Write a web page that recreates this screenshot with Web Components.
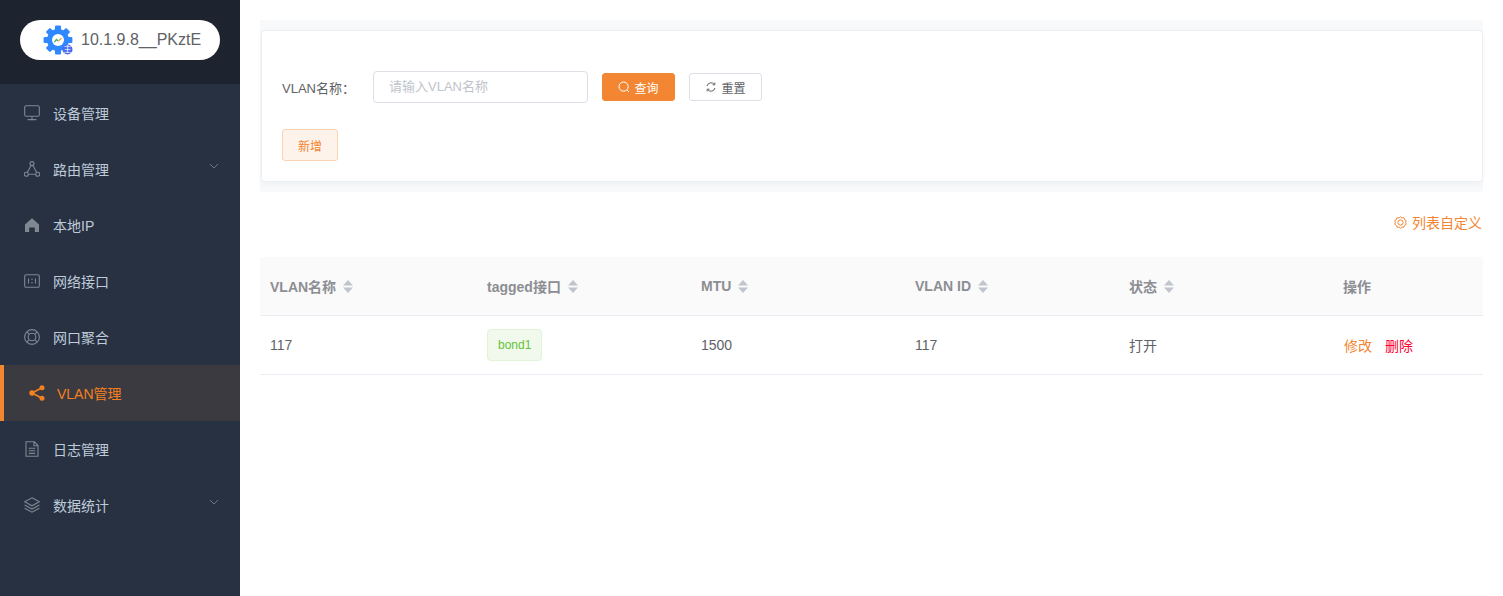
<!DOCTYPE html>
<html lang="zh">
<head>
<meta charset="utf-8">
<title>VLAN管理</title>
<style>
  html, body { margin: 0; height: 100%; }
  body { font-family: "Liberation Sans", "Noto Sans CJK SC", sans-serif; }
</style>
</head>
<body>
<vlan-app>
  <side-bar slot="side">
    <host-badge slot="head">10.1.9.8__PKztE</host-badge>
    <menu-item icon="monitor">设备管理</menu-item>
    <menu-item icon="graph" arrow>路由管理</menu-item>
    <menu-item icon="home">本地IP</menu-item>
    <menu-item icon="port">网络接口</menu-item>
    <menu-item icon="ring">网口聚合</menu-item>
    <menu-item icon="share" active>VLAN管理</menu-item>
    <menu-item icon="file">日志管理</menu-item>
    <menu-item icon="layers" arrow>数据统计</menu-item>
  </side-bar>
  <search-panel></search-panel>
  <list-custom></list-custom>
  <vlan-table></vlan-table>
</vlan-app>

<script>
/**
 * Icons of the side menu, all on a 16x16 box.
 */
const ICONS = {
  monitor: '<rect x="0.7" y="0.7" width="14.6" height="10.6" rx="1.6"/><path d="M8 11.5v3M3.5 14.6h9"/>',
  graph: '<circle cx="8" cy="2.6" r="2"/><circle cx="2.3" cy="13.2" r="2"/><circle cx="13.7" cy="13.2" r="2"/><path d="M7 4.4 3.3 11.4M9 4.4l3.7 7M4.3 13.2h7.4"/>',
  home: '<path fill="currentColor" stroke="none" d="M8 1.2 15 7.4V15H10.8V10.6H5.2V15H1V7.4Z"/>',
  port: '<rect x="0.7" y="1.7" width="14.6" height="12.6" rx="1.4"/><path d="M4.5 5.5v5M11.5 5.5v5M8 5.5v1.4M8 9v1.5"/>',
  ring: '<circle cx="8" cy="8" r="7.4"/><circle cx="8" cy="8" r="3.8"/><path d="M2.8 2.8 5.3 5.3M13.2 2.8l-2.5 2.5M2.8 13.2l2.5-2.5M13.2 13.2l-2.5-2.5"/>',
  share: '<g fill="currentColor" stroke="none"><circle cx="3" cy="8" r="2.7"/><circle cx="13" cy="2.8" r="2.5"/><circle cx="13" cy="13.2" r="2.5"/></g><path stroke-width="1.6" d="M3 8 13 2.8M3 8l10 5.2"/>',
  file: '<path d="M2 .8H10.4L14 4.4V15.2H2ZM10 1V4.8H14M4.8 7.2h6.4M4.8 9.8h6.4M4.8 12.4h6.4"/>',
  layers: '<path d="M8 .8 15.4 4.8 8 8.8.6 4.8ZM.6 8 8 12l7.4-4M.6 11.2 8 15.2l7.4-4"/>'
}

/**
 * Reads a template's markup into a new open shadow root.
 *
 * @param {HTMLElement} el the host.
 * @param {string} html the markup.
 */
function shadow (el, html) {
  const template = document.createElement('template')
  template.innerHTML = html
  el.attachShadow({ mode: 'open' }).appendChild(template.content.cloneNode(true))
}

customElements.define('vlan-app', class extends HTMLElement {
  constructor () {
    super()
    shadow(this, `
      <style>
        :host { display: flex; width: 100%; height: 100vh; overflow: hidden; background: #fff; }
        main { flex: 1; min-width: 0; display: flex; flex-direction: column; padding: 20px 20px 0; position: relative; }
        .topshade { height: 0; margin: -20px -20px 20px; box-shadow: 0 0 12px rgba(0, 0, 0, .14); }
      </style>
      <slot name="side"></slot>
      <main><div class="topshade"></div><slot></slot></main>
    `)
  }
})

customElements.define('side-bar', class extends HTMLElement {
  constructor () {
    super()
    shadow(this, `
      <style>
        :host { display: block; width: 240px; flex: none; background: #283142; position: relative; z-index: 1; }
        header { height: 84px; box-sizing: border-box; padding: 20px; background: #1d2430; margin-bottom: 1px; }
      </style>
      <header><slot name="head"></slot></header>
      <slot></slot>
    `)
  }
})

customElements.define('host-badge', class extends HTMLElement {
  constructor () {
    super()
    shadow(this, `
      <style>
        :host { display: flex; align-items: center; gap: 7px; height: 40px; padding-left: 23px; border-radius: 20px; background: #fff; color: #606266; font-size: 16px; }
        svg { width: 31px; height: 31px; flex: none; }
        text { font-size: 8px; fill: #fff; font-family: "Noto Sans CJK SC", sans-serif; }
      </style>
      <svg viewBox="0 0 31 31">
        <g fill="#2f88ff">
          <circle cx="15" cy="15" r="11"/>
          <g id="teeth">
            <rect x="12" y="0.6" width="6" height="6" rx="1"/>
            <rect x="12" y="0.6" width="6" height="6" rx="1" transform="rotate(45 15 15)"/>
            <rect x="12" y="0.6" width="6" height="6" rx="1" transform="rotate(90 15 15)"/>
            <rect x="12" y="0.6" width="6" height="6" rx="1" transform="rotate(135 15 15)"/>
            <rect x="12" y="0.6" width="6" height="6" rx="1" transform="rotate(180 15 15)"/>
            <rect x="12" y="0.6" width="6" height="6" rx="1" transform="rotate(225 15 15)"/>
            <rect x="12" y="0.6" width="6" height="6" rx="1" transform="rotate(270 15 15)"/>
            <rect x="12" y="0.6" width="6" height="6" rx="1" transform="rotate(315 15 15)"/>
          </g>
        </g>
        <circle cx="15" cy="15" r="6" fill="#fff"/>
        <path d="M11.5 17l2-2.5 1.8 1.6" fill="none" stroke="#45b36b" stroke-width="1.3"/>
        <path d="M15.3 16.1 18.5 13" fill="none" stroke="#e8a33d" stroke-width="1.3"/>
        <circle cx="24.5" cy="24.5" r="5" fill="#4a6cf0"/>
        <text x="24.5" y="27.3" text-anchor="middle">主</text>
      </svg>
      <span><slot></slot></span>
    `)
  }
})

customElements.define('menu-item', class extends HTMLElement {
  constructor () {
    super()
    const arrow = this.hasAttribute('arrow')
      ? '<svg class="arrow" viewBox="0 0 10 6"><path d="M1 1l4 4 4-4"/></svg>'
      : ''
    shadow(this, `
      <style>
        :host { display: flex; align-items: center; gap: 13px; height: 56px; padding-left: 24px; box-sizing: border-box; font-size: 14px; color: #bfcbd9; position: relative; }
        :host([active]) { background: #3a3a40; color: #f58020; border-left: 4px solid #f28632; padding-left: 25px; gap: 12px; }
        svg.icon { width: 16px; height: 16px; flex: none; color: #7f8793; fill: none; stroke: currentColor; stroke-width: 1.1; }
        :host([active]) svg.icon { color: #f58020; }
        .arrow { position: absolute; right: 21px; top: 22px; width: 10px; height: 6px; fill: none; stroke: #6f7785; stroke-width: 1; }
      </style>
      <svg class="icon" viewBox="0 0 16 16">${ICONS[this.getAttribute('icon')]}</svg>
      <span><slot></slot></span>
      ${arrow}
    `)
  }
})

customElements.define('ui-button', class extends HTMLElement {
  constructor () {
    super()
    shadow(this, `
      <style>
        :host { display: inline-flex; align-items: center; justify-content: center; gap: 4px; box-sizing: border-box; width: 73px; height: 28px; border: 1px solid #dcdfe6; border-radius: 3px; background: #fff; color: #606266; font-size: 12px; }
        :host([primary]) { background: #f28632; border-color: #f28632; color: #fff; }
        :host([plain]) { width: 56px; height: 32px; background: #fef3ea; border-color: #fbd3b3; color: #f28632; }
        ::slotted(svg) { width: 12px; height: 12px; fill: none; stroke: currentColor; stroke-width: 1; flex: none; }
      </style>
      <slot></slot>
    `)
  }
})

customElements.define('search-panel', class extends HTMLElement {
  constructor () {
    super()
    shadow(this, `
      <style>
        :host { display: block; padding: 10px 0 10px 1px; background: #f8f9fb; }
        .card { box-sizing: border-box; height: 152px; padding: 40px 20px 0; background: #fff; border: 1px solid #ebeef5; border-radius: 4px; box-shadow: 0 2px 6px rgba(0, 0, 0, .04); }
        .row { display: flex; align-items: center; height: 32px; font-size: 13px; color: #606266; }
        label { width: 91px; flex: none; }
        .input { box-sizing: border-box; width: 215px; height: 32px; line-height: 30px; padding-left: 15px; margin-right: 14px; border: 1px solid #dcdfe6; border-radius: 4px; color: #c0c4cc; }
        ui-button + ui-button { margin-left: 14px; }
        .actions { margin-top: 26px; display: flex; }
      </style>
      <div class="card">
        <div class="row">
          <label>VLAN名称：</label>
          <div class="input">请输入VLAN名称</div>
          <ui-button primary><svg viewBox="0 0 12 12"><circle cx="5.6" cy="5.6" r="4.6"/><path d="M9 9l2 2"/></svg>查询</ui-button>
          <ui-button><svg viewBox="0 0 12 12"><path d="M2 5a4.2 4.2 0 0 1 7.4-1.6M10 7a4.2 4.2 0 0 1-7.4 1.6"/><path d="M9.8 1.6v2.2H7.6M2.2 10.4V8.2h2.2"/></svg>重置</ui-button>
        </div>
        <div class="actions"><ui-button plain>新增</ui-button></div>
      </div>
    `)
  }
})

customElements.define('list-custom', class extends HTMLElement {
  constructor () {
    super()
    shadow(this, `
      <style>
        :host { display: flex; justify-content: flex-end; align-items: center; gap: 5px; height: 20px; margin: 20px 1px 25px 0; font-size: 14px; color: #f28632; }
        svg { width: 13px; height: 13px; fill: none; stroke: currentColor; stroke-width: 1; }
      </style>
      <svg viewBox="0 0 13 13"><circle cx="6.5" cy="6.5" r="2.6"/><path d="M6.5 .8 8 2l1.900-.2.7 1.800 1.600 1L11.700 6.500l.500 1.900-1.600 1-.7 1.800L8 11l-1.500 1.200L5 11l-1.900.2-.7-1.800-1.600-1 .5-1.900-.5-1.900 1.600-1 .7-1.800L5 2Z"/></svg>
      <span>列表自定义</span>
    `)
  }
})

customElements.define('sort-head', class extends HTMLElement {
  constructor () {
    super()
    shadow(this, `
      <style>
        :host { display: inline-flex; align-items: center; gap: 7px; }
        svg { width: 10px; height: 13px; fill: #c0c4cc; }
      </style>
      <span><slot></slot></span>
      <svg viewBox="0 0 10 13"><path d="M5 0l5 5.500H0ZM5 13 0 7.500h10Z"/></svg>
    `)
  }
})

customElements.define('vlan-table', class extends HTMLElement {
  constructor () {
    super()
    shadow(this, `
      <style>
        :host { display: block; font-size: 14px; color: #606266; margin-right: 0; }
        .row { display: grid; grid-template-columns: 217px 214px 214px 214px 214px 1fr; border-bottom: 1px solid #ebeef5; align-items: center; }
        .head { height: 59px; box-sizing: border-box; background: #fafafa; font-weight: bold; color: #8c8e93; }
        .body { height: 59px; box-sizing: border-box; }
        .row > div { padding-left: 10px; }
        .tag { display: inline-block; box-sizing: border-box; height: 32px; line-height: 30px; padding: 0 10px; font-size: 12px; color: #67c23a; background: #f0f9eb; border: 1px solid #e1f3d8; border-radius: 4px; }
        .edit { color: #f28632; margin-left: 1px; }
        .del { color: #ff0033; margin-left: 13px; }
      </style>
      <div class="row head">
        <div><sort-head>VLAN名称</sort-head></div>
        <div><sort-head>tagged接口</sort-head></div>
        <div><sort-head>MTU</sort-head></div>
        <div><sort-head>VLAN ID</sort-head></div>
        <div><sort-head>状态</sort-head></div>
        <div>操作</div>
      </div>
      <div class="row body">
        <div>117</div>
        <div><span class="tag">bond1</span></div>
        <div>1500</div>
        <div>117</div>
        <div>打开</div>
        <div><span class="edit">修改</span><span class="del">删除</span></div>
      </div>
    `)
  }
})
</script>
</body>
</html>
